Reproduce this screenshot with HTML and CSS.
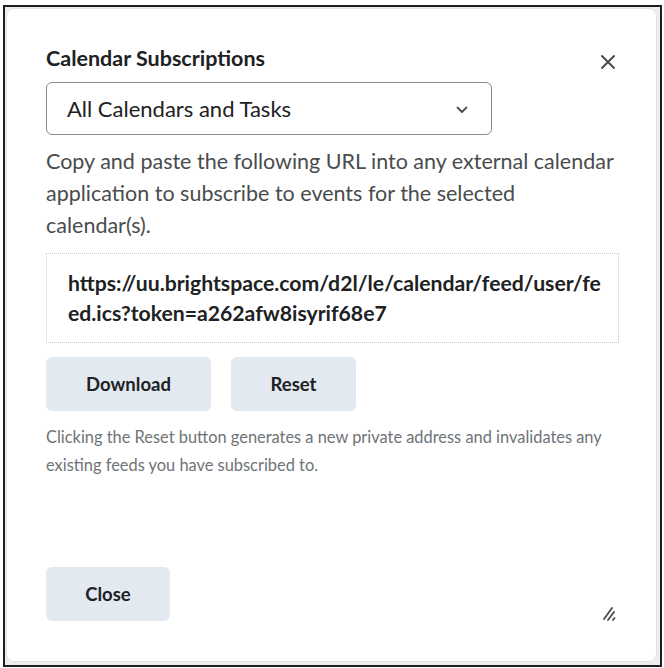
FILE: index.html
```html
<!DOCTYPE html>
<html lang="en">
<head>
<meta charset="utf-8">
<title>Calendar Subscriptions</title>
<link rel="stylesheet" href="styles.css">
</head>
<body>
<div class="frame">
  <div class="dialog">
    <div class="header">
      <h2 class="title">Calendar Subscriptions</h2>
      <button class="close-x" aria-label="Close">
        <svg width="16" height="16" viewBox="0 0 16 16"><path d="M2 2 L14 14 M14 2 L2 14" stroke="#494c4e" stroke-width="2" stroke-linecap="round" fill="none"/></svg>
      </button>
    </div>
    <div class="select">
      <span>All Calendars and Tasks</span>
      <svg class="chev" width="12" height="8" viewBox="0 0 12 8"><path d="M1.5 1.5 L6 6 L10.5 1.5" stroke="#494c4e" stroke-width="1.8" stroke-linecap="round" stroke-linejoin="round" fill="none"/></svg>
    </div>
    <p class="desc">Copy and paste the following URL into any external calendar application to subscribe to events for the selected calendar(s).</p>
    <div class="url">https://uu.brightspace.com/d2l/le/calendar/feed/user/feed.ics?token=a262afw8isyrif68e7</div>
    <div class="actions">
      <button class="btn">Download</button>
      <button class="btn btn-reset">Reset</button>
    </div>
    <p class="note">Clicking the Reset button generates a new private address and invalidates any existing feeds you have subscribed to.</p>
    <div class="footer">
      <button class="btn btn-close">Close</button>
      <svg class="resize" width="14" height="16" viewBox="0 0 14 16"><path d="M1 14 L9 3 M5 15 L11 7 M10 15 L11.5 13" stroke="#494c4e" stroke-width="1.8" stroke-linecap="round" fill="none"/></svg>
    </div>
  </div>
</div>
</body>
</html>
```
FILE: styles.css
```css
html, body {
  margin: 0;
  padding: 0;
  background: #ffffff;
}
body {
  padding: 5px 0 0 3px;
  font-family: Lato, "Noto Sans", sans-serif;
  color: #494c4e;
}
.frame {
  width: 653px;
  height: 656px;
  border: 2px solid #1e1e1e;
  background: #eceef1;
  padding: 1px;
  box-sizing: content-box;
}
.dialog {
  box-sizing: border-box;
  width: 651px;
  height: 654px;
  background: #ffffff;
  border-radius: 8px;
  border: 1px solid #dfe2e6;
  padding: 35px 38px 0 39px;
  display: flex;
  flex-direction: column;
}
.header {
  display: flex;
  align-items: center;
  justify-content: space-between;
  height: 28px;
}
.title {
  margin: 0;
  font-size: 21.5px;
  font-weight: 700;
  color: #202122;
}
.close-x {
  border: 0;
  background: none;
  padding: 0;
  margin: 8px 2px 0 0;
  width: 16px;
  height: 16px;
  display: flex;
}
.select {
  margin-top: 10px;
  width: 446px;
  height: 53px;
  box-sizing: border-box;
  border: 1px solid #868c8f;
  border-radius: 6px;
  display: flex;
  align-items: center;
  justify-content: space-between;
  padding: 0 23px 0 20px;
  font-size: 22px;
  color: #202122;
}
.chev { margin-top: 2px; }
.desc {
  margin: 10px 0 0;
  font-size: 21.5px;
  line-height: 32px;
  color: #494c4e;
  width: 575px;
}
.url {
  margin-top: 12px;
  width: 573px;
  box-sizing: border-box;
  border: 1px dotted #c9cbcd;
  padding: 14px 13px 14px 21px;
  font-size: 21.2px;
  font-weight: 700;
  line-height: 30px;
  color: #202122;
  word-break: break-all;
}
.actions {
  display: flex;
  gap: 20px;
  margin-top: 14px;
}
.btn {
  font-family: Lato, "Noto Sans", sans-serif;
  background: #e3e9f1;
  border: 0;
  border-radius: 6px;
  height: 54px;
  width: 165px;
  font-size: 18.5px;
  font-weight: 700;
  color: #202122;
  padding: 0;
}
.btn-reset { width: 125px; }
.note {
  margin: 12px 0 0;
  font-size: 16.4px;
  line-height: 28px;
  color: #6e7377;
  width: 575px;
}
.footer {
  margin-top: auto;
  margin-bottom: 40px;
  display: flex;
  align-items: flex-end;
  justify-content: space-between;
  padding-right: 1px;
}
.btn-close { width: 124px; }
```
